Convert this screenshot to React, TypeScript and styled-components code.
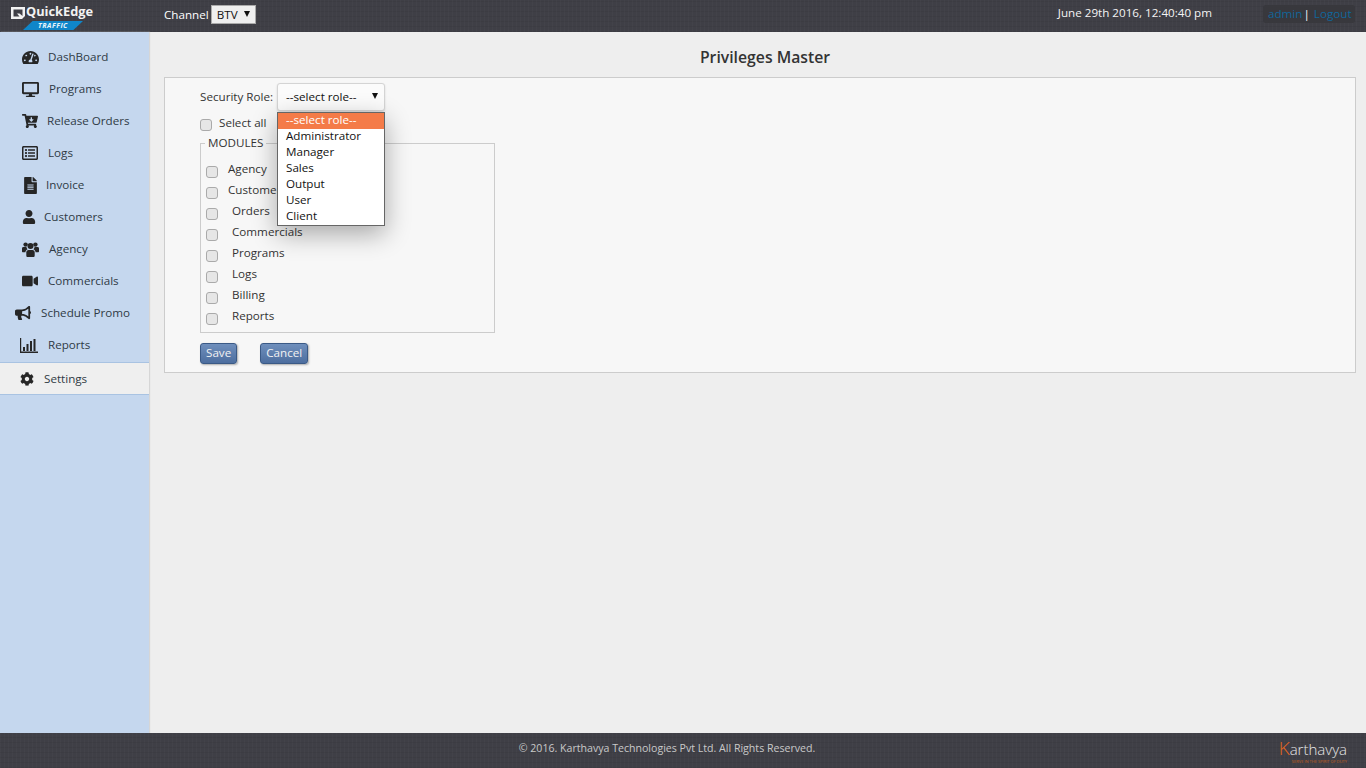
import { ReactNode } from "react";
import styled, { createGlobalStyle } from "styled-components";
import {
  FaBullhorn,
  FaCartArrowDown,
  FaCog,
  FaDesktop,
  FaFileAlt,
  FaRegListAlt,
  FaTachometerAlt,
  FaUser,
  FaVideo,
} from "react-icons/fa";

const GlobalStyle = createGlobalStyle`
  html, body {
    margin: 0;
    padding: 0;
    height: 100%;
    background: #eeeeee;
    font-family: "Open Sans", "Noto Sans", sans-serif;
    font-size: 11.65px;
    color: #333;
  }
  #root {
    height: 100%;
  }
`;

const texture = `
  background-color: #3f3f46;
  background-image:
    repeating-linear-gradient(90deg, rgba(255, 255, 255, 0.018) 0 1px, transparent 1px 4px),
    repeating-linear-gradient(0deg, rgba(0, 0, 0, 0.05) 0 1px, transparent 1px 5px);
`;

const Page = styled.div`
  height: 768px;
  display: flex;
  flex-direction: column;
  overflow: hidden;
`;

const Header = styled.header`
  ${texture}
  height: 32px;
  box-sizing: border-box;
  padding-bottom: 4px;
  flex: none;
  display: flex;
  align-items: center;
  color: #fff;
`;

const Logo = styled.div`
  width: 164px;
  height: 32px;
  flex: none;
  align-self: flex-start;
  position: relative;
`;

const LogoMark = styled.svg`
  position: absolute;
  left: 11px;
  top: 6px;
`;

const LogoName = styled.span`
  position: absolute;
  left: 26px;
  top: 2px;
  font-size: 12.8px;
  line-height: 19px;
  font-weight: 700;
  color: #f2f2f2;
`;

const LogoBadge = styled.span`
  position: absolute;
  left: 23px;
  top: 21px;
  width: 60px;
  height: 9px;
  background: #0f86c9;
  clip-path: polygon(16% 0, 100% 0, 84% 100%, 0 100%);
  color: #e8f4fb;
  font-size: 7px;
  line-height: 9px;
  font-weight: 700;
  font-style: italic;
  letter-spacing: 0.5px;
  text-align: center;
`;

const ChannelLabel = styled.span`
  margin-right: 2px;
`;

const ChannelSelect = styled.div`
  width: 45px;
  height: 19px;
  box-sizing: border-box;
  display: flex;
  align-items: center;
  justify-content: space-between;
  padding: 0 5px;
  background: #efefef;
  border: 1px solid #aaa;
  color: #111;
`;

const Arrow = styled.span`
  width: 0;
  height: 0;
  border-left: 3.5px solid transparent;
  border-right: 3.5px solid transparent;
  border-top: 6px solid #111;
`;

const Clock = styled.span`
  margin-left: auto;
  padding-bottom: 4px;
  color: #f4f4f4;
`;

const UserBox = styled.div`
  width: 92px;
  height: 18px;
  box-sizing: border-box;
  margin: 0 11px 0 51px;
  padding: 0 0 2px 5px;
  display: flex;
  align-items: center;
  background: #38383d;
  border-radius: 3px;
  color: #fff;
`;

const UserLink = styled.a`
  color: #10669a;
  text-decoration: none;
  margin-right: 1px;
  & + & {
    margin-left: 4px;
  }
`;

const Body = styled.div`
  flex: 1;
  display: flex;
  min-height: 0;
`;

const Sidebar = styled.nav`
  width: 149px;
  flex: none;
  padding-top: 9px;
  background: #c5d7ee;
  box-shadow: 1px 0 1px #d6d6d6;
`;

const NavItem = styled.div<{ $active?: boolean; $left: number }>`
  height: ${(p) => (p.$active ? "33px" : "32px")};
  box-sizing: border-box;
  display: flex;
  align-items: center;
  padding-left: ${(p) => p.$left}px;
  color: #2f3a45;
  ${(p) =>
    p.$active &&
    `
    background: #efefef;
    margin-top: 1px;
    padding-top: 1px;
    border-top: 1px solid #a9c3e2;
    border-bottom: 1px solid #a9c3e2;
  `}
`;

const NavIcon = styled.span<{ $slot: number }>`
  width: ${(p) => p.$slot}px;
  flex: none;
  display: flex;
  align-items: center;
  color: #262626;
`;

const NavLabel = styled.span`
  padding-bottom: 2px;
`;

const Main = styled.main`
  flex: 1;
  min-width: 0;
  padding: 0 10px 0 15px;
`;

const Title = styled.h1`
  margin: 0;
  height: 45px;
  box-sizing: border-box;
  display: flex;
  align-items: center;
  justify-content: center;
  padding: 4px 0 0 10px;
  font-size: 15.75px;
  font-weight: 600;
  color: #333;
`;

const Panel = styled.section`
  height: 296px;
  box-sizing: border-box;
  border: 1px solid #cccccc;
  background: #f7f7f7;
  padding: 5px 0 0 35px;
`;

const RoleRow = styled.div`
  position: relative;
  display: flex;
  align-items: center;
  height: 28px;
`;

const RoleLabel = styled.label`
  width: 77px;
  flex: none;
  padding-bottom: 2px;
  color: #333;
`;

const RoleSelect = styled.div`
  width: 108px;
  height: 28px;
  box-sizing: border-box;
  display: flex;
  align-items: center;
  justify-content: space-between;
  padding: 0 6px 2px 8px;
  background: #fbfbfb;
  border: 1px solid #d4d4d4;
  border-radius: 3px;
  box-shadow: 0 1px 2px rgba(0, 0, 0, 0.15);
  color: #111;
`;

const RoleMenu = styled.ul`
  position: absolute;
  left: 77px;
  top: 29px;
  z-index: 2;
  width: 108px;
  margin: 0;
  padding: 0;
  box-sizing: border-box;
  list-style: none;
  background: #fff;
  border: 1px solid #666;
  box-shadow: 0 8px 24px rgba(0, 0, 0, 0.32);
`;

const RoleOption = styled.li<{ $selected?: boolean }>`
  height: 16px;
  line-height: 14px;
  padding-left: 8px;
  color: ${(p) => (p.$selected ? "#fff" : "#111")};
  background: ${(p) => (p.$selected ? "#f47b48" : "transparent")};
`;

const Check = styled.input.attrs({ type: "checkbox" })`
  appearance: none;
  position: relative;
  top: 1px;
  width: 12px;
  height: 12px;
  flex: none;
  margin: 0;
  background: #e6e6e6;
  border: 1px solid #aaa;
  border-radius: 3px;
`;

const SelectAll = styled.label`
  display: flex;
  align-items: center;
  gap: 7px;
  height: 16px;
  margin-top: 3px;
  color: #333;
  input {
    top: 3px;
  }
`;

const Modules = styled.fieldset`
  width: 295px;
  height: 198px;
  box-sizing: border-box;
  margin: 5px 0 0;
  padding: 9px 0 0;
  border: 1px solid #ccc;
  min-inline-size: 0;
`;

const ModulesLegend = styled.legend`
  margin-left: 4px;
  padding: 0 3px;
  line-height: 16px;
  color: #333;
`;

const ModuleRow = styled.label<{ $indent: number }>`
  display: flex;
  align-items: center;
  height: 21px;
  margin-left: 5px;
  gap: ${(p) => p.$indent}px;
  color: #333;
  span {
    position: relative;
    top: -2px;
  }
`;

const Actions = styled.div`
  display: flex;
  gap: 23px;
  margin-top: 10px;
`;

const Button = styled.button`
  height: 21px;
  padding: 0 5px 2px;
  box-sizing: border-box;
  font: inherit;
  color: #f2f2f2;
  background: linear-gradient(#6f8fbc, #4d6e9f);
  border: 1px solid #3b5a86;
  border-radius: 3px;
  box-shadow: 1px 1px 2px rgba(0, 0, 0, 0.3);
`;

const Footer = styled.footer`
  ${texture}
  height: 35px;
  box-sizing: border-box;
  flex: none;
  position: relative;
  display: flex;
  align-items: center;
  justify-content: center;
  padding: 0 32px 5px 0;
  font-size: 10.6px;
  color: #c9c9c9;
`;

const Brand = styled.div`
  position: absolute;
  right: 19px;
  top: 5px;
  width: 71px;
  text-align: right;
`;

const BrandName = styled.div`
  font-size: 15px;
  line-height: 20px;
  font-weight: 300;
  color: #e6e6e6;
  span {
    color: #e2661f;
    font-size: 19px;
  }
`;

const BrandTag = styled.div`
  font-size: 4px;
  line-height: 5px;
  white-space: nowrap;
  color: #c4601f;
`;

function ChartIcon() {
  return (
    <svg width="18" height="15" viewBox="0 0 18 15" fill="currentColor">
      <path d="M0 0h1.2v13.6H18V15H0z" />
      <path d="M3 9h2v4H3zM6.5 6h2v7h-2zM10 3h2v10h-2zM13.5 1h2v12h-2z" />
    </svg>
  );
}

function GroupIcon() {
  return (
    <svg width="17" height="16" viewBox="0 0 17 16" fill="currentColor">
      <circle cx="3.6" cy="3.6" r="2.2" />
      <circle cx="13.4" cy="3.6" r="2.2" />
      <circle cx="8.5" cy="5" r="3" />
      <path d="M0 7.5C0 6.4.8 6 1.8 6h2.6c.2 1 .6 1.7 1.2 2.2-1.3.5-2 1.5-2.2 3H1c-.6 0-1-.4-1-1zM17 7.5c0-1.100-.8-1.500-1.800-1.500h-2.600c-.2 1-.6 1.700-1.200 2.200 1.300.5 2 1.500 2.200 3H16c.6 0 1-.4 1-1z" />
      <path d="M4.300 11.500c0-1.600.9-2.600 2.200-2.600h4c1.300 0 2.200 1 2.200 2.600v2.900c0 .9-.6 1.600-1.500 1.600H5.800c-.9 0-1.500-.7-1.500-1.600z" />
    </svg>
  );
}

type NavEntry = {
  label: string;
  icon: ReactNode;
  left: number;
  slot: number;
  active?: boolean;
};

const navItems: NavEntry[] = [
  { label: "DashBoard", icon: <FaTachometerAlt size={17} />, left: 22, slot: 26 },
  { label: "Programs", icon: <FaDesktop size={17} />, left: 22, slot: 27 },
  { label: "Release Orders", icon: <FaCartArrowDown size={16} />, left: 22, slot: 25 },
  { label: "Logs", icon: <FaRegListAlt size={16} />, left: 22, slot: 26 },
  { label: "Invoice", icon: <FaFileAlt size={17} />, left: 22, slot: 24 },
  { label: "Customers", icon: <FaUser size={14} />, left: 22, slot: 22 },
  { label: "Agency", icon: <GroupIcon />, left: 22, slot: 27 },
  { label: "Commercials", icon: <FaVideo size={16} />, left: 22, slot: 26 },
  { label: "Schedule Promo", icon: <FaBullhorn size={16} />, left: 15, slot: 26 },
  { label: "Reports", icon: <ChartIcon />, left: 20, slot: 28 },
  { label: "Settings", icon: <FaCog size={14} />, left: 20, slot: 24, active: true },
];

const roles = ["--select role--", "Administrator", "Manager", "Sales", "Output", "User", "Client"];

const modules = [
  { label: "Agency", indent: 10 },
  { label: "Customers", indent: 10 },
  { label: "Orders", indent: 14 },
  { label: "Commercials", indent: 14 },
  { label: "Programs", indent: 14 },
  { label: "Logs", indent: 14 },
  { label: "Billing", indent: 14 },
  { label: "Reports", indent: 14 },
];

function App() {
  return (
    <Page>
      <GlobalStyle />
      <Header>
        <Logo>
          <LogoMark width="14" height="14" viewBox="0 0 14 14">
            <path
              d="M0 1h14v9l-3 3H0z M2.500 3.500v7h6L6 7.500h2.500l3 2.500V3.500z"
              fill="#f2f2f2"
              fillRule="evenodd"
            />
          </LogoMark>
          <LogoName>QuickEdge</LogoName>
          <LogoBadge>TRAFFIC</LogoBadge>
        </Logo>
        <ChannelLabel>Channel</ChannelLabel>
        <ChannelSelect>
          BTV
          <Arrow />
        </ChannelSelect>
        <Clock>June 29th 2016, 12:40:40 pm</Clock>
        <UserBox>
          <UserLink href="#">admin</UserLink>|<UserLink href="#">Logout</UserLink>
        </UserBox>
      </Header>
      <Body>
        <Sidebar>
          {navItems.map((item) => (
            <NavItem key={item.label} $left={item.left} $active={item.active}>
              <NavIcon $slot={item.slot}>{item.icon}</NavIcon>
              <NavLabel>{item.label}</NavLabel>
            </NavItem>
          ))}
        </Sidebar>
        <Main>
          <Title>Privileges Master</Title>
          <Panel>
            <RoleRow>
              <RoleLabel>Security Role:</RoleLabel>
              <RoleSelect>
                --select role--
                <Arrow />
              </RoleSelect>
              <RoleMenu>
                {roles.map((role, i) => (
                  <RoleOption key={role} $selected={i === 0}>
                    {role}
                  </RoleOption>
                ))}
              </RoleMenu>
            </RoleRow>
            <SelectAll>
              <Check />
              Select all
            </SelectAll>
            <Modules>
              <ModulesLegend>MODULES</ModulesLegend>
              {modules.map((m) => (
                <ModuleRow key={m.label} $indent={m.indent}>
                  <Check />
                  <span>{m.label}</span>
                </ModuleRow>
              ))}
            </Modules>
            <Actions>
              <Button>Save</Button>
              <Button>Cancel</Button>
            </Actions>
          </Panel>
        </Main>
      </Body>
      <Footer>
        © 2016. Karthavya Technologies Pvt Ltd. All Rights Reserved.
        <Brand>
          <BrandName>
            <span>K</span>arthavya
          </BrandName>
          <BrandTag>SERVE IN THE SPIRIT OF DUTY</BrandTag>
        </Brand>
      </Footer>
    </Page>
  );
}

export default App;
